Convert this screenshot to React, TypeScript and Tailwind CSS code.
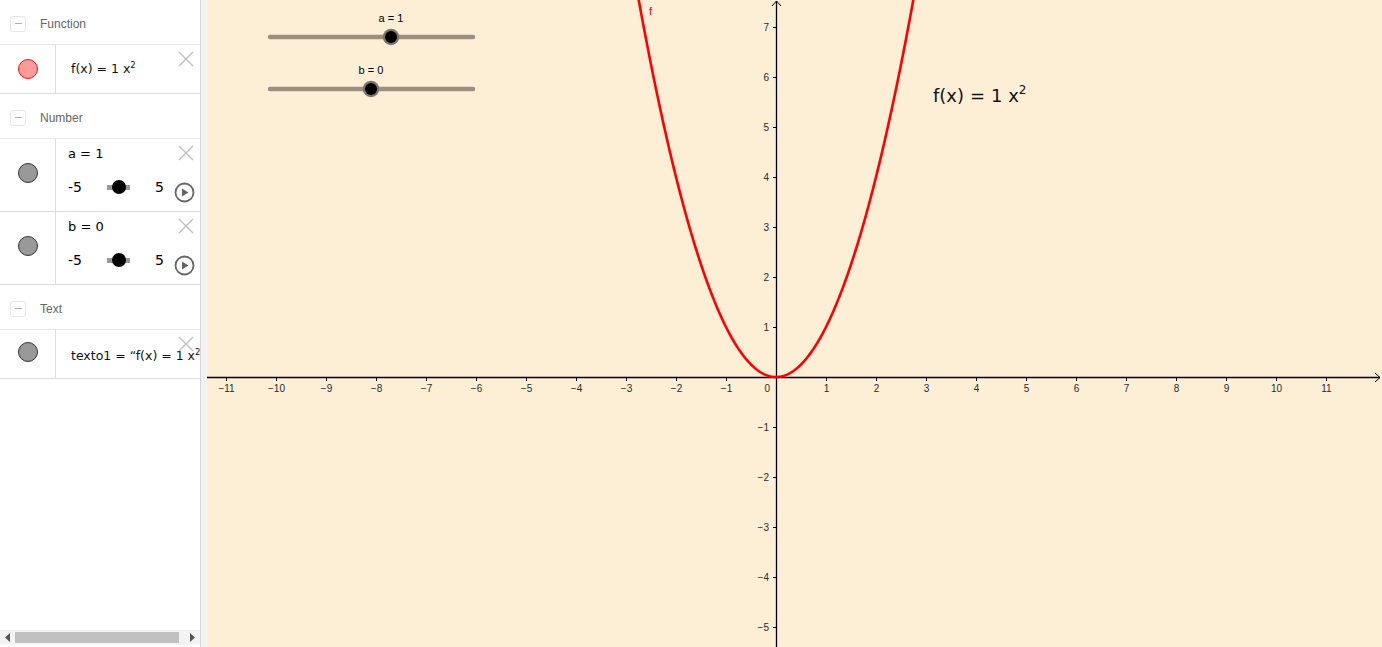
import React from "react";

// GeoGebra-like view: algebra panel on the left, graphics canvas on the right.

const W = 1175;
const H = 647;
const OX = 569; // origin inside the canvas
const OY = 377;
const S = 50; // px per unit

const px = (x: number) => OX + x * S;
const py = (y: number) => OY - y * S;
const MINUS = "\u2212";

const parabola = (() => {
  const pts: string[] = [];
  for (let x = -2.8; x <= 2.8001; x += 0.02) {
    pts.push(`${px(x).toFixed(2)},${py(x * x).toFixed(2)}`);
  }
  return "M" + pts.join(" L");
})();

const XTICKS = Array.from({ length: 23 }, (_, i) => i - 11).filter((i) => i !== 0);
const YTICKS = [7, 6, 5, 4, 3, 2, 1, -1, -2, -3, -4, -5];

const fmt = (n: number) => (n < 0 ? `${MINUS}${-n}` : `${n}`);

function CloseIcon() {
  return (
    <svg width="16" height="16" viewBox="0 0 16 16" className="absolute right-[6px] top-[6px]">
      <path d="M1 1 L15 15 M15 1 L1 15" stroke="#bdbdbd" strokeWidth="1.3" />
    </svg>
  );
}

function PlayIcon() {
  return (
    <svg width="21" height="21" viewBox="0 0 21 21" className="absolute right-[5px] top-[43px]">
      <circle cx="10.5" cy="10.5" r="9" fill="none" stroke="#666" strokeWidth="1.8" />
      <path d="M8 6.5 L14.5 10.5 L8 14.5 Z" fill="#666" />
    </svg>
  );
}

function Marble({ red }: { red?: boolean }) {
  return red ? (
    <div className="h-[20px] w-[20px] rounded-full border-[1.5px] border-[#ee1111] bg-[#ff9a9a]" />
  ) : (
    <div className="h-[20px] w-[20px] rounded-full border border-[#333] bg-[#999]" />
  );
}

function Header({ label }: { label: string }) {
  return (
    <div className="flex h-[45px] shrink-0 items-center border-b border-[#e8e8e8] pt-[3px]">
      <div className="ml-[10px] flex h-[16px] w-[16px] items-center justify-center rounded-[3px] border border-[#e6e6e6]">
        <div className="h-px w-[7px] bg-[#b0b0b0]" />
      </div>
      <span className="ml-[14px] font-['Liberation_Sans',Arial,sans-serif] text-[12px] text-[#666]">
        {label}
      </span>
    </div>
  );
}

function NumberRow({ name, value }: { name: string; value: number }) {
  return (
    <div className="relative flex h-[73px] shrink-0 border-b border-[#dcdcdc]">
      <div className="flex w-[56px] shrink-0 items-center justify-center border-r border-[#dcdcdc] pb-[4px]">
        <Marble />
      </div>
      <div className="flex flex-col pl-[12px] pt-[6px] font-['DejaVu_Sans',sans-serif] text-black">
        <div className="h-[18px] text-[13px] leading-[18px]">
          {name} = {value}
        </div>
        <div className="mt-[12px] flex h-[24px] items-center text-[14px]">
          <span className="w-[39px]">-5</span>
          <div className="flex h-[5px] w-[23px] items-center justify-center bg-[#9a9a9a]">
            <div className="h-[14px] w-[14px] shrink-0 rounded-full bg-black" />
          </div>
          <span className="ml-[25px]">5</span>
        </div>
      </div>
      <CloseIcon />
      <PlayIcon />
    </div>
  );
}

function AlgebraPanel() {
  return (
    <div className="flex h-full w-[200px] shrink-0 flex-col bg-white">
      <Header label="Function" />
      <div className="relative flex h-[49px] shrink-0 border-b border-[#dcdcdc]">
        <div className="flex w-[56px] shrink-0 items-center justify-center border-r border-[#dcdcdc]">
          <Marble red />
        </div>
        <div className="flex items-center pl-[15px] font-['DejaVu_Sans',sans-serif] text-[12.5px] text-[#111]">
          f(x) = 1 x<sup className="text-[8.5px]">2</sup>
        </div>
        <CloseIcon />
      </div>
      <Header label="Number" />
      <NumberRow name="a" value={1} />
      <NumberRow name="b" value={0} />
      <Header label="Text" />
      <div className="relative flex h-[49px] shrink-0 border-b border-[#dcdcdc]">
        <div className="flex w-[56px] shrink-0 items-center justify-center border-r border-[#dcdcdc] pb-[4px]">
          <Marble />
        </div>
        <div className="flex min-w-0 flex-1 items-center overflow-hidden whitespace-nowrap pl-[15px] pt-[5px] font-['DejaVu_Sans',sans-serif] text-[12.5px] text-[#111]">
          texto1 = “f(x) = 1 x<sup className="text-[8.5px]">2</sup>”
        </div>
        <CloseIcon />
      </div>
      <div className="flex-1" />
      <div className="flex h-[15px] shrink-0 items-center bg-[#f3f3f3]">
        <div className="flex w-[15px] items-center justify-center">
          <svg width="5" height="9" viewBox="0 0 5 9">
            <path d="M5 0 L0 4.5 L5 9 Z" fill="#555" />
          </svg>
        </div>
        <div className="h-[11px] w-[164px] bg-[#c1c1c1]" />
        <div className="flex-1" />
        <div className="flex w-[15px] items-center justify-center">
          <svg width="5" height="9" viewBox="0 0 5 9">
            <path d="M0 0 L5 4.5 L0 9 Z" fill="#555" />
          </svg>
        </div>
      </div>
      <div className="h-[2px] shrink-0" />
    </div>
  );
}

function CanvasSlider({ y, knob, label }: { y: number; knob: number; label: string }) {
  return (
    <g>
      <text
        x={knob}
        y={y - 15}
        textAnchor="middle"
        fontSize="11"
        fontFamily="'Liberation Sans', Arial, sans-serif"
        fill="#000"
      >
        {label}
      </text>
      <line x1={63} x2={266} y1={y} y2={y} stroke="#9b8f7e" strokeWidth="4.5" strokeLinecap="round" />
      <circle cx={knob} cy={y} r={8.3} fill="#7d776c" />
      <circle cx={knob} cy={y} r={6} fill="#000" />
    </g>
  );
}

function Graphics() {
  const label = "'Liberation Sans', Arial, sans-serif";
  return (
    <div className="relative h-full flex-1 overflow-hidden bg-[#fdeed6]">
      <svg width={W} height={H} viewBox={`0 0 ${W} ${H}`} className="block">
        {/* axes */}
        <line x1={0} x2={W - 2} y1={OY + 0.5} y2={OY + 0.5} stroke="#000" strokeWidth="1.3" />
        <path d={`M${W - 7} ${OY - 4} L${W - 2} ${OY + 0.5} L${W - 7} ${OY + 5}`} fill="none" stroke="#000" strokeWidth="1" />
        <line x1={OX + 0.5} x2={OX + 0.5} y1={1} y2={H} stroke="#000" strokeWidth="1.3" />
        <path d={`M${OX - 4} 6 L${OX + 0.5} 1 L${OX + 5} 6`} fill="none" stroke="#000" strokeWidth="1" />

        {XTICKS.map((i) => (
          <g key={`x${i}`}>
            <line x1={px(i) + 0.5} x2={px(i) + 0.5} y1={OY} y2={OY + 4} stroke="#000" strokeWidth="1" />
            <text x={px(i) + 0.5} y={OY + 14.5} textAnchor="middle" fontSize="10" fontFamily={label} fill="#2a2a2a">
              {fmt(i)}
            </text>
          </g>
        ))}
        <text x={OX - 6} y={OY + 14.5} textAnchor="end" fontSize="10" fontFamily={label} fill="#2a2a2a">
          0
        </text>

        {YTICKS.map((j) => (
          <g key={`y${j}`}>
            <line x1={OX - 3} x2={OX} y1={py(j) + 0.5} y2={py(j) + 0.5} stroke="#000" strokeWidth="1" />
            <text x={OX - 7} y={py(j) + 4} textAnchor="end" fontSize="10" fontFamily={label} fill="#2a2a2a">
              {fmt(j)}
            </text>
          </g>
        ))}

        {/* f(x) = x^2 */}
        <path d={parabola} fill="none" stroke="#ff0000" strokeWidth="2.6" strokeLinejoin="round" />
        <text x={442} y={15} fontSize="11" fontFamily={label} fill="#ff0000">
          f
        </text>

        <CanvasSlider y={37} knob={184} label="a = 1" />
        <CanvasSlider y={89} knob={164} label="b = 0" />

        <text x={726} y={102} fontSize="18" fontFamily="'DejaVu Sans', sans-serif" fill="#111">
          <tspan>f(x)</tspan>
          <tspan>{"\u2004=\u2004"}</tspan>
          <tspan>1 x</tspan>
          <tspan dy="-8" fontSize="12">
            2
          </tspan>
        </text>
      </svg>
    </div>
  );
}

export default function App() {
  return (
    <div className="flex h-[647px] w-full overflow-hidden bg-white">
      <AlgebraPanel />
      <div className="h-full w-[7px] shrink-0 border-l border-[#d4d4d4] bg-[#f2f2f2]" />
      <Graphics />
    </div>
  );
}
